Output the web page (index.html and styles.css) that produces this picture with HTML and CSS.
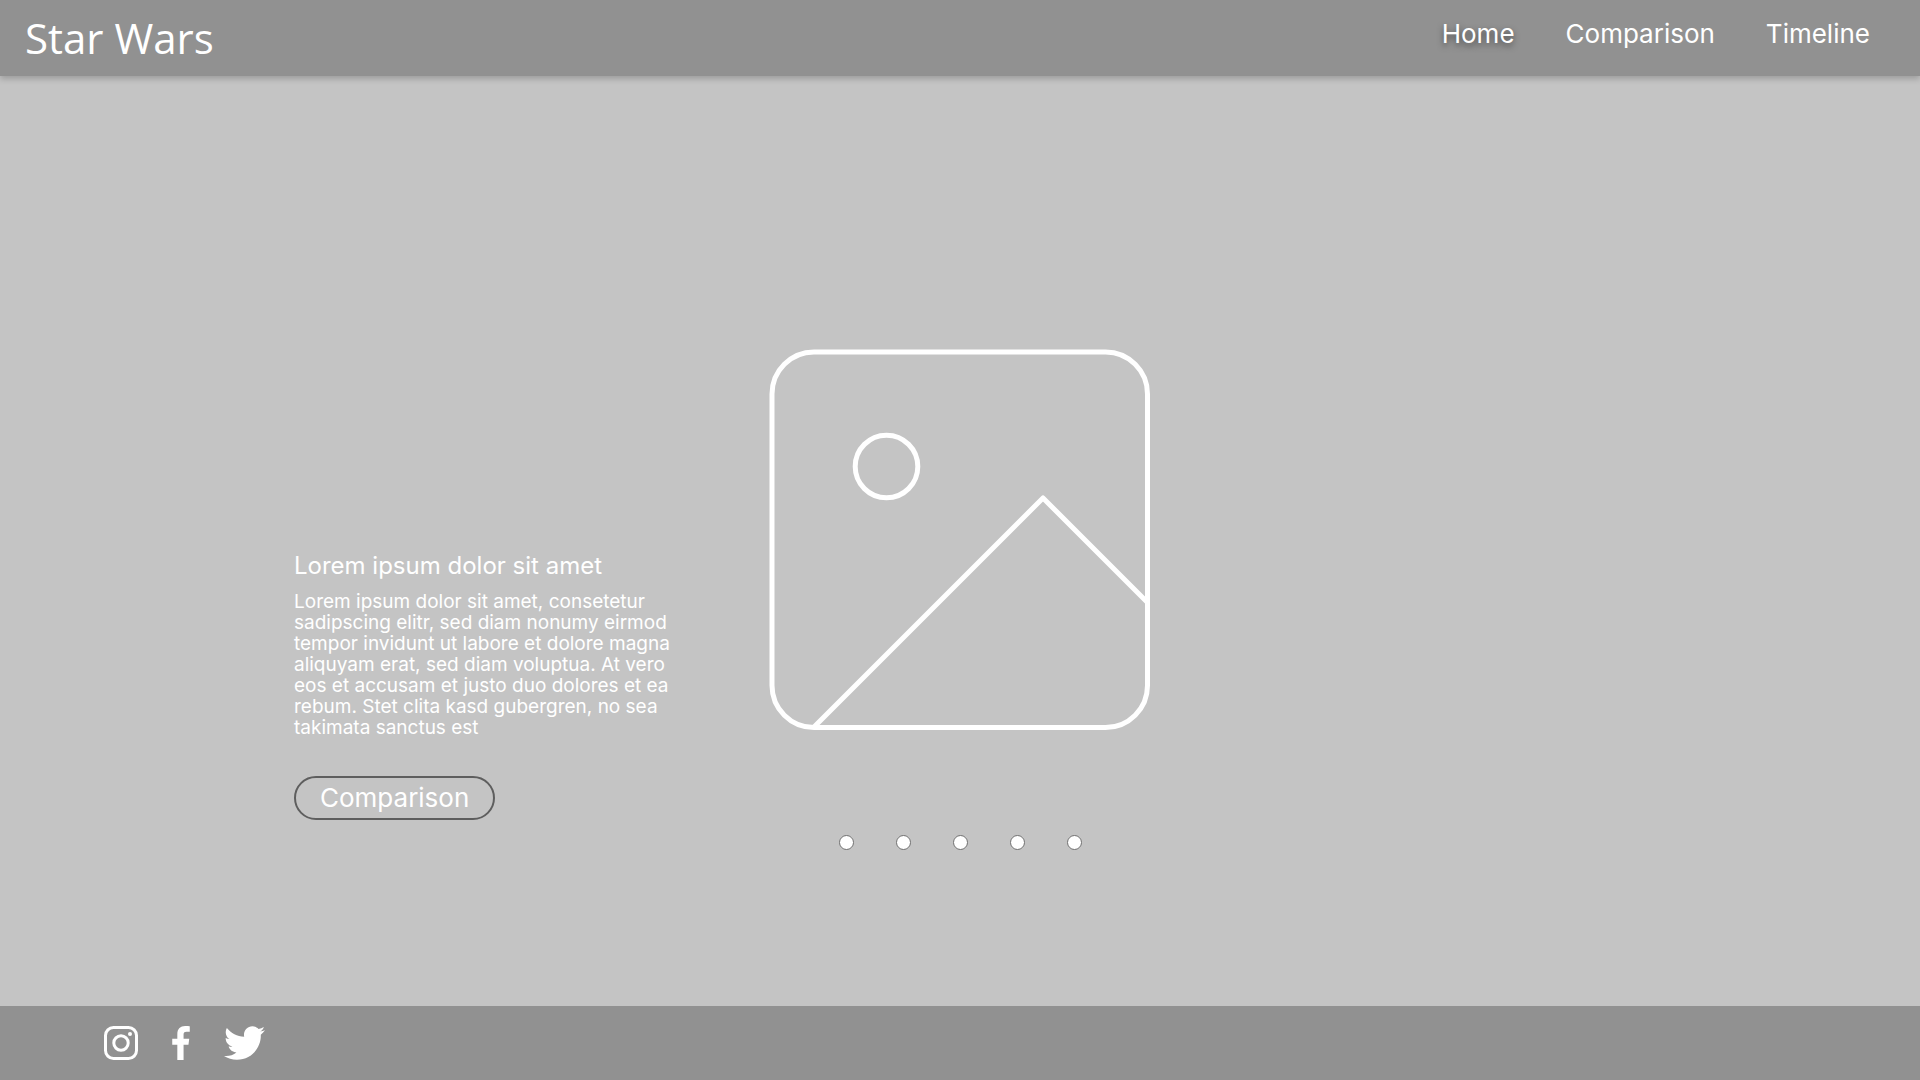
FILE: index.html
```html
<!DOCTYPE html>
<html lang="en">
<head>
  <meta charset="utf-8">
  <meta name="viewport" content="width=device-width, initial-scale=1">
  <title>Star Wars</title>
  <link rel="stylesheet" href="styles.css">
</head>
<body>
  <header class="site-header">
    <a class="brand" href="#">Star Wars</a>
    <nav class="site-nav">
      <a class="nav-link nav-link-active" href="#" aria-current="page">Home</a>
      <a class="nav-link" href="#comparison">Comparison</a>
      <a class="nav-link" href="#timeline">Timeline</a>
    </nav>
  </header>

  <main class="hero">
    <section class="intro">
      <h1 class="intro-title">Lorem ipsum dolor sit amet</h1>
      <p class="intro-text">Lorem ipsum dolor sit amet, consetetur sadipscing elitr, sed diam nonumy eirmod tempor invidunt ut labore et dolore magna aliquyam erat, sed diam voluptua. At vero eos et accusam et justo duo dolores et ea rebum. Stet clita kasd gubergren, no sea takimata sanctus est</p>
      <button class="intro-button" type="button">Comparison</button>
    </section>

    <section class="carousel">
      <svg class="slide" viewBox="0 0 382 382" fill="none" stroke="#fff" stroke-width="5" stroke-linejoin="round" role="img" aria-label="Picture">
        <rect x="3" y="3" width="375.500" height="375.500" rx="42"/>
        <circle cx="117.500" cy="117.500" r="31.300"/>
        <path d="M44.500 378.500 274 149l104.500 104.500"/>
      </svg>
      <div class="dots">
        <button class="dot" type="button" aria-label="Slide 1"></button>
        <button class="dot" type="button" aria-label="Slide 2"></button>
        <button class="dot" type="button" aria-label="Slide 3"></button>
        <button class="dot" type="button" aria-label="Slide 4"></button>
        <button class="dot" type="button" aria-label="Slide 5"></button>
      </div>
    </section>
  </main>

  <footer class="site-footer">
    <a class="social" href="#instagram" aria-label="Instagram">
      <svg width="34" height="34" viewBox="0 0 34 34" fill="none" stroke="#fff" stroke-width="3">
        <rect x="1.500" y="1.500" width="31" height="31" rx="8"/>
        <circle cx="17" cy="17" r="7.200"/>
        <circle cx="26" cy="8" r="2" fill="#fff" stroke="none"/>
      </svg>
    </a>
    <a class="social" href="#facebook" aria-label="Facebook">
      <svg width="18" height="34" viewBox="0 0 264 512" fill="#fff">
        <path d="M76.700 512V283H0v-91h76.700v-71.700C76.700 42.400 124.300 0 193.800 0c33.300 0 61.900 2.500 70.200 3.600V85h-48.200c-37.800 0-45.100 18-45.100 44.300V192H256l-11.700 91h-73.600v229"/>
      </svg>
    </a>
    <a class="social" href="#twitter" aria-label="Twitter">
      <svg width="41" height="34" viewBox="0 48 512 416" fill="#fff">
        <path d="M459.370 151.716c.325 4.548.325 9.097.325 13.645 0 138.720-105.583 298.558-298.558 298.558-59.452 0-114.680-17.219-161.137-47.106 8.447.974 16.568 1.299 25.340 1.299 49.055 0 94.213-16.568 130.274-44.832-46.132-.975-84.792-31.188-98.112-72.772 6.498.974 12.995 1.624 19.818 1.624 9.421 0 18.843-1.300 27.614-3.573-48.081-9.747-84.143-51.980-84.143-102.985v-1.299c13.969 7.797 30.214 12.670 47.431 13.319-28.264-18.843-46.781-51.005-46.781-87.391 0-19.492 5.197-37.360 14.294-52.954 51.655 63.675 129.300 105.258 216.365 109.807-1.624-7.797-2.599-15.918-2.599-24.040 0-57.828 46.782-104.934 104.934-104.934 30.213 0 57.502 12.670 76.670 33.137 23.715-4.548 46.456-13.320 66.599-25.340-7.798 24.366-24.366 44.833-46.132 57.827 21.117-2.273 41.584-8.122 60.426-16.243-14.292 20.791-32.161 39.308-52.628 54.253z"/>
      </svg>
    </a>
  </footer>
</body>
</html>
```
FILE: styles.css
```css
* {
  box-sizing: border-box;
}

body {
  margin: 0;
  min-height: 100vh;
  display: flex;
  flex-direction: column;
  background: #c4c4c4;
  color: #fff;
  font-family: "Inter", "Liberation Sans", sans-serif;
}

a {
  color: inherit;
  text-decoration: none;
}

button {
  font: inherit;
  color: inherit;
  cursor: pointer;
}

.site-header {
  display: flex;
  align-items: center;
  justify-content: space-between;
  height: 76px;
  padding: 0 50px 8px 25px;
  background: #919191;
  box-shadow: 0 3px 6px rgba(0, 0, 0, 0.2);
}

.brand {
  padding-top: 8px;
  font-family: "Open Sans", sans-serif;
  font-size: 42px;
  line-height: 60px;
}

.site-nav {
  display: flex;
  gap: 51px;
}

.nav-link {
  font-size: 26px;
  line-height: 32px;
}

.nav-link-active {
  text-shadow: 0 3px 6px rgba(0, 0, 0, 0.5);
}

.hero {
  flex: 1;
  display: grid;
  grid-template-columns: 1fr 382px 1fr;
  column-gap: 90px;
  align-content: center;
  padding-top: 116px;
}

.intro {
  justify-self: end;
  align-self: end;
  width: 385px;
  padding-bottom: 30px;
}

.intro-title {
  margin: 0 0 11px;
  font-size: 24px;
  font-weight: 400;
  line-height: 29px;
}

.intro-text {
  margin: 0 0 38px;
  font-size: 19px;
  line-height: 21px;
}

.intro-button {
  display: block;
  height: 44px;
  padding: 0 24px;
  border: 2px solid #5e5e5e;
  border-radius: 22px;
  background: none;
  font-size: 26px;
  line-height: 32px;
}

.carousel {
  display: flex;
  flex-direction: column;
  align-items: center;
  gap: 104px;
}

.slide {
  width: 100%;
}

.dots {
  display: flex;
  gap: 42px;
}

.dot {
  width: 15px;
  height: 15px;
  padding: 0;
  border: 1px solid #707070;
  border-radius: 50%;
  background: #fff;
}

.site-footer {
  display: flex;
  align-items: center;
  gap: 34px;
  height: 74px;
  padding: 0 104px;
  background: #919191;
}

.social {
  display: flex;
}
```
